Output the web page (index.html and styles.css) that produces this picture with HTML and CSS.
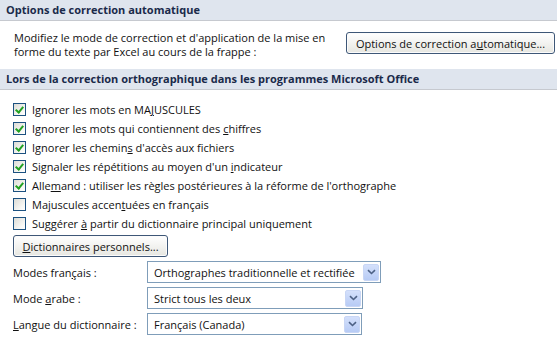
FILE: index.html
```html
<!DOCTYPE html>
<html lang="fr">
<head>
<meta charset="utf-8">
<link rel="stylesheet" href="styles.css">
</head>
<body>
<div class="page">
  <div class="section-head">Options de correction automatique</div>
  <div class="auto-row">
    <p class="auto-text">Modifiez le mode de correction et d'application de la mise en<br>forme du texte par Excel au cours de la frappe :</p>
    <button class="btn btn-auto">Options de correction a<u>u</u>tomatique...</button>
  </div>
  <div class="section-head">Lors de la correction orthographique dans les programmes Microsoft Office</div>
  <div class="checks">
    <label class="check"><span class="box on"></span><span>Ignorer les mots en MA<u>J</u>USCULES</span></label>
    <label class="check"><span class="box on"></span><span>Ignorer les mots qui contiennent des <u>c</u>hiffres</span></label>
    <label class="check"><span class="box on"></span><span>Ignorer les chemin<u>s</u> d'accès aux fichiers</span></label>
    <label class="check"><span class="box on"></span><span>Signaler les répétitions au moyen d'un <u>i</u>ndicateur</span></label>
    <label class="check"><span class="box on"></span><span>Alle<u>m</u>and : utiliser les règles postérieures à la réforme de l'orthographe</span></label>
    <label class="check"><span class="box"></span><span>Majuscules accen<u>t</u>uées en français</span></label>
    <label class="check"><span class="box"></span><span>Suggérer <u>à</u> partir du dictionnaire principal uniquement</span></label>
  </div>
  <div class="dict-row"><button class="btn btn-dict"><u>D</u>ictionnaires personnels...</button></div>
  <div class="form-row">
    <span class="lbl">Modes fran<u>ç</u>ais :</span>
    <div class="select sel1"><span class="val">Orthographes traditionnelle et rectifiée</span><span class="arrow"><svg width="9" height="6" viewBox="0 0 9 6"><path d="M1 1.2 L4.5 4.5 L8 1.2" fill="none" stroke="#4d6185" stroke-width="1.6"/></svg></span></div>
  </div>
  <div class="form-row">
    <span class="lbl">Mode <u>a</u>rabe :</span>
    <div class="select sel2"><span class="val">Strict tous les deux</span><span class="arrow"><svg width="9" height="6" viewBox="0 0 9 6"><path d="M1 1.2 L4.5 4.5 L8 1.2" fill="none" stroke="#4d6185" stroke-width="1.6"/></svg></span></div>
  </div>
  <div class="form-row">
    <span class="lbl"><u>L</u>angue du dictionnaire :</span>
    <div class="select sel3"><span class="val">Français (Canada)</span><span class="arrow"><svg width="9" height="6" viewBox="0 0 9 6"><path d="M1 1.2 L4.5 4.5 L8 1.2" fill="none" stroke="#4d6185" stroke-width="1.6"/></svg></span></div>
  </div>
</div>
</body>
</html>
```
FILE: styles.css
```css
html, body {
  margin: 0;
  padding: 0;
  background: #ffffff;
}
body {
  font-family: "Open Sans", "Noto Sans", sans-serif;
  font-size: 11px;
  color: #111;
}
.page {
  width: 557px;
  height: 338px;
  overflow: hidden;
}
.section-head {
  height: 20px;
  line-height: 20px;
  background: #dfe5ee;
  border-bottom: 1px solid #c6c9cf;
  padding-left: 6px;
  font-weight: bold;
  color: #1a2a4a;
}
.auto-row {
  display: flex;
  justify-content: space-between;
  align-items: flex-start;
  padding: 10px 2px 0 14px;
  height: 38px;
}
.auto-text {
  margin: 0;
  line-height: 14px;
}
.btn {
  font-family: inherit;
  font-size: 11px;
  color: #111;
  height: 22px;
  padding: 0 8px;
  border: 1px solid #3e5777;
  border-radius: 3px;
  background: linear-gradient(#ffffff 0%, #f4f4f2 45%, #e6e6e0 100%);
  box-shadow: inset 0 0 0 1px #fbfbfb;
}
.btn-auto {
  width: 209px;
  margin-top: 1px;
}
.checks {
  display: flex;
  flex-direction: column;
  padding: 10px 0 0 13px;
}
.check {
  display: flex;
  align-items: center;
  height: 19px;
  gap: 6px;
}
.box {
  width: 11px;
  height: 11px;
  border: 1px solid #1c5180;
  background: linear-gradient(135deg, #dcdcd6 0%, #f7f7f4 70%, #ffffff 100%);
  position: relative;
  flex: none;
}
.box.on::after {
  content: "";
  position: absolute;
  left: 3px;
  top: 1px;
  width: 3px;
  height: 6px;
  border-right: 2px solid #21a121;
  border-bottom: 2px solid #21a121;
  transform: rotate(40deg);
}
.dict-row {
  padding: 2px 0 2px 13px;
  height: 22px;
}
.btn-dict {
  width: 155px;
  height: 22px;
}
.form-row {
  display: flex;
  align-items: center;
  padding-left: 13px;
  height: 26px;
}
.lbl {
  width: 134px;
  flex: none;
}
.select {
  border: 1px solid #7f9db9;
  display: flex;
  align-items: center;
  justify-content: space-between;
  padding: 0 1px 0 6px;
  box-sizing: border-box;
  height: 22px;
}
.sel1 { width: 234px; }
.sel2 { width: 216px; }
.sel3 { width: 215px; }
.arrow {
  width: 16px;
  height: 17px;
  border-radius: 2px;
  background: linear-gradient(#d4e0fb, #b7cbf5);
  border: 1px solid #c8d6f5;
  box-sizing: border-box;
  display: flex;
  align-items: center;
  justify-content: center;
}
```
